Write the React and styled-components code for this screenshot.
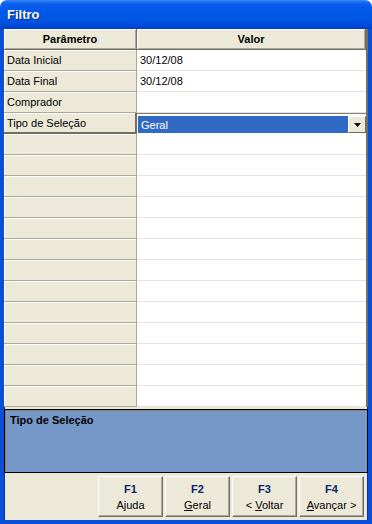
import styled, { createGlobalStyle } from "styled-components";

const GlobalStyle = createGlobalStyle`
  html, body {
    margin: 0;
    padding: 0;
    background: #ffffff;
  }
  * {
    box-sizing: border-box;
  }
`;

const Window = styled.div`
  width: 372px;
  height: 524px;
  display: flex;
  flex-direction: column;
  font-family: "Liberation Sans", Tahoma, Arial, sans-serif;
  font-size: 11px;
  color: #000;
`;

const TitleBar = styled.div`
  height: 29px;
  flex: none;
  display: flex;
  align-items: center;
  padding: 0 0 1px 7px;
  border-radius: 7px 7px 0 0;
  background: linear-gradient(
    to bottom,
    #3d8ef7 0px,
    #1a6ef2 2px,
    #0a5ced 5px,
    #0058e8 12px,
    #0055e3 20px,
    #004ad6 26px,
    #003fc4 29px
  );
  color: #fff;
  font-weight: bold;
  font-size: 13px;
  text-shadow: 1px 1px 0 #0a2a8a;
`;

const Body = styled.div`
  flex: 1;
  display: flex;
  flex-direction: column;
  background: #ece9d8;
  border: 4px solid #0a4fd8;
  border-top: none;
  box-shadow: inset 1px 0 0 #0831a8, inset -1px 0 0 #0831a8;
`;

const Grid = styled.div`
  display: grid;
  grid-template-columns: 133px 1fr;
  grid-auto-rows: 21px;
  background: #fff;
  border-right: 2px solid #716f64;
`;

const HeaderCell = styled.div`
  display: flex;
  align-items: center;
  justify-content: center;
  font-weight: bold;
  background: #ece9d8;
  border-right: 1px solid #716f64;
  border-bottom: 1px solid #716f64;
  box-shadow: inset 1px 1px 0 #fff, inset -1px -1px 0 #aca899;
`;

const ParamCell = styled.div`
  display: flex;
  align-items: center;
  padding-left: 3px;
  background: #ece9d8;
  border-right: ${(p) => (p.$current ? "2px solid #716f64" : "1px solid #aca899")};
  border-bottom: ${(p) => (p.$current ? "2px solid #716f64" : "1px solid #aca899")};
  box-shadow: inset 1px 1px 0 #fff;
  white-space: nowrap;
`;

const ValueCell = styled.div`
  display: flex;
  align-items: center;
  padding-left: 3px;
  background: #fff;
  border-bottom: 1px solid #e6e4da;
  white-space: nowrap;
`;

const ComboCell = styled.div`
  display: flex;
  background: #fff;
  padding: 2px 0 1px 1px;
  border-top: 1px solid #808080;
`;

const ComboText = styled.div`
  flex: 1;
  display: flex;
  align-items: center;
  padding-left: 3px;
  background: #316ac5;
  color: #fff;
`;

const DropButton = styled.div`
  width: 18px;
  display: flex;
  align-items: center;
  justify-content: center;
  background: #ece9d8;
  border: 1px solid;
  border-color: #fff #716f64 #716f64 #fff;
`;

const HelpPanel = styled.div`
  height: 64px;
  margin-top: 2px;
  padding: 4px 5px;
  background: #7698c9;
  border: 1px solid #000;
  box-shadow: inset 1px 1px 0 #808080;
  font-weight: bold;
`;

const ButtonBar = styled.div`
  flex: 1;
  display: flex;
  justify-content: flex-end;
  align-items: flex-start;
  gap: 2px;
  padding: 3px 4px 0 0;
`;

const FButton = styled.div`
  width: 65px;
  height: 41px;
  display: flex;
  flex-direction: column;
  align-items: center;
  justify-content: center;
  gap: 4px;
  background: #ece9d8;
  border: 1px solid;
  border-color: #fff #716f64 #716f64 #fff;
  box-shadow: inset -1px -1px 0 #aca899;
`;

const FKey = styled.span`
  font-weight: bold;
  color: #0a246a;
`;

const FLabel = styled.span`
  white-space: nowrap;
`;

const rows = [
  { label: "Data Inicial", value: "30/12/08" },
  { label: "Data Final", value: "30/12/08" },
  { label: "Comprador", value: "" },
  { label: "Tipo de Seleção", value: "Geral", combo: true },
  ...Array.from({ length: 13 }, () => ({ label: "", value: "" })),
];

const buttons = [
  { key: "F1", label: <>Ajuda</> },
  { key: "F2", label: <><u>G</u>eral</> },
  { key: "F3", label: <>&lt; <u>V</u>oltar</> },
  { key: "F4", label: <><u>A</u>vançar &gt;</> },
];

function DownArrow() {
  return (
    <svg width="7" height="4" viewBox="0 0 7 4">
      <polygon points="0,0 7,0 3.5,4" fill="#000" />
    </svg>
  );
}

export default function App() {
  return (
    <>
      <GlobalStyle />
      <Window>
        <TitleBar>Filtro</TitleBar>
        <Body>
          <Grid>
            <HeaderCell>Parâmetro</HeaderCell>
            <HeaderCell>Valor</HeaderCell>
            {rows.map((r, i) => (
              <Row key={i} row={r} />
            ))}
          </Grid>
          <HelpPanel>Tipo de Seleção</HelpPanel>
          <ButtonBar>
            {buttons.map((b) => (
              <FButton key={b.key}>
                <FKey>{b.key}</FKey>
                <FLabel>{b.label}</FLabel>
              </FButton>
            ))}
          </ButtonBar>
        </Body>
      </Window>
    </>
  );
}

function Row({ row }) {
  return (
    <>
      <ParamCell $current={row.combo}>{row.label}</ParamCell>
      {row.combo ? (
        <ComboCell>
          <ComboText>{row.value}</ComboText>
          <DropButton>
            <DownArrow />
          </DropButton>
        </ComboCell>
      ) : (
        <ValueCell>{row.value}</ValueCell>
      )}
    </>
  );
}
